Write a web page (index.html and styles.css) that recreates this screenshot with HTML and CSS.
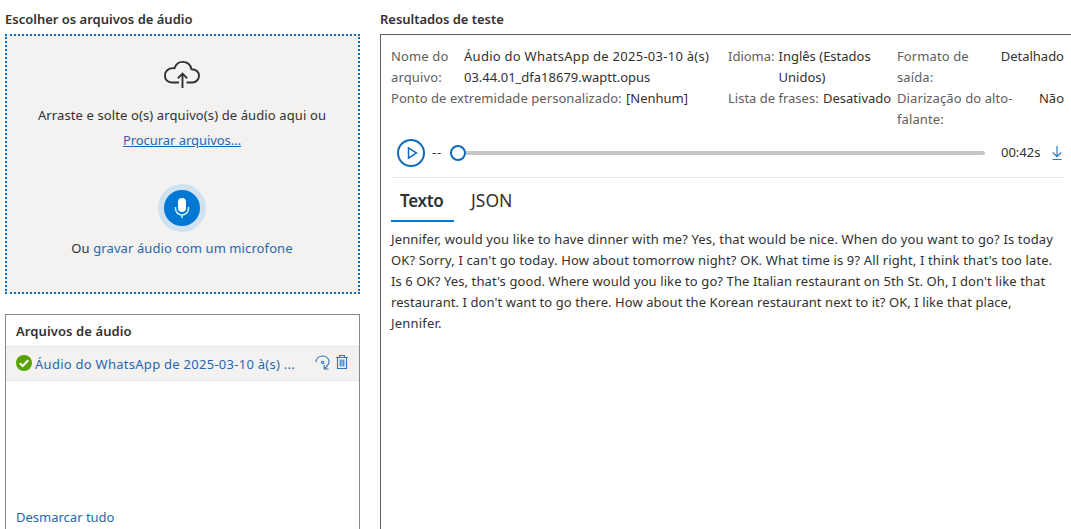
FILE: index.html
```html
<!DOCTYPE html>
<html lang="pt-BR">
<head>
<meta charset="utf-8">
<title>Resultados de teste</title>
<link rel="stylesheet" href="styles.css">
</head>
<body>
<main class="page">
  <section class="sources">
    <h2 class="heading">Escolher os arquivos de áudio</h2>
    <div class="dropzone">
      <svg class="cloud" width="38" height="30" viewBox="0 0 38 30" fill="none" stroke="#323130" stroke-width="1.9"><path d="M16 22.500H8.500C4.500 22.500 1.900 19.300 1.900 15.500C1.900 11 5.500 7.500 11.500 8.200C13 4 15.800 1.900 19.500 1.900C24 1.900 27.500 4.500 28.500 9.200C33 9 36 12 36 15.800C36 19.500 33 22.500 29.500 22.500H23.500M19.500 28V14M14.800 18.300L19.500 13.600L24.200 18.300"/></svg>
      <p class="drop-text">Arraste e solte o(s) arquivo(s) de áudio aqui ou</p>
      <a class="link browse">Procurar arquivos...</a>
      <div class="mic">
        <svg width="48" height="48" viewBox="0 0 48 48"><circle cx="24" cy="24" r="24" fill="#d0e2f0"/><circle cx="24" cy="24" r="18" fill="#0078d4"/><rect x="20" y="14" width="8" height="14" rx="4" fill="#fff"/><path d="M17.500 23V24.500A6.500 6.500 0 0 0 30.500 24.500V23M24 31V34" fill="none" stroke="#d4f0ff" stroke-width="1.500"/></svg>
      </div>
      <p class="record">Ou <a class="link">gravar áudio com um microfone</a></p>
    </div>
    <div class="files">
      <h3 class="files-title">Arquivos de áudio</h3>
      <div class="file">
        <svg width="16" height="16" viewBox="0 0 16 16"><circle cx="8" cy="8" r="8" fill="#57a300"/><path d="M3.700 8.200L6.700 11L12.200 5.200" fill="none" stroke="#fff" stroke-width="2.100"/></svg>
        <a class="link file-name">Áudio do WhatsApp de 2025-03-10 à(s) ...</a>
        <svg class="redo" width="16" height="16" viewBox="0 0 16 16" fill="none" stroke="#2b76bd" stroke-width="1.100"><path d="M1 7.200A6.600 6.600 0 0 1 14 6C14.500 9 12.500 11 9.500 13.700M9.200 10V14H13.500"/><circle cx="7.700" cy="7.500" r="1.200"/></svg>
        <svg width="14" height="16" viewBox="0 0 14 16" fill="none" stroke="#2b76bd" stroke-width="1.100"><path d="M1 3.500H13M4.500 3.500V1.500H9.500V3.500M2.500 3.500V14.500H11.500V3.500M5.200 5.500V12.500M7 5.500V12.500M8.800 5.500V12.500"/></svg>
      </div>
      <a class="link clear">Desmarcar tudo</a>
    </div>
  </section>
  <section class="results">
    <h2 class="heading results-heading">Resultados de teste</h2>
    <div class="panel">
      <div class="meta">
        <div class="pair pair-name"><span class="label">Nome do<br>arquivo:</span><span class="value"><span class="first">Áudio do WhatsApp de 2025-03-10 à(s)</span><br>03.44.01_dfa18679.waptt.opus</span></div>
        <div class="pair pair-language"><span class="label">Idioma:</span><span class="value">Inglês (Estados<br>Unidos)</span></div>
        <div class="pair pair-end"><span class="label">Formato de<br>saída:</span><span class="value">Detalhado</span></div>
        <div class="pair pair-endpoint"><span class="label">Ponto de extremidade personalizado:</span><span class="value">[Nenhum]</span></div>
        <div class="pair pair-phrases"><span class="label">Lista de frases:</span><span class="value">Desativado</span></div>
        <div class="pair pair-end"><span class="label">Diarização do alto-<br>falante:</span><span class="value">Não</span></div>
      </div>
      <div class="player">
        <svg width="28" height="28" viewBox="0 0 28 28" fill="none" stroke="#0f6cbd"><circle cx="14" cy="14" r="13" stroke-width="2"/><path d="M11.500 8.800V19.200L19.500 14Z" stroke-width="1.500"/></svg>
        <span class="elapsed">--</span>
        <div class="slider"><span class="thumb"></span><span class="track"></span></div>
        <span class="duration">00:42s</span>
        <svg class="download" width="12" height="16" viewBox="0 0 12 16" fill="none" stroke="#2b7cc8" stroke-width="1.200"><path d="M6 1V11.500M1.800 7.500L6 11.700L10.200 7.500M1.500 14.500H10.500"/></svg>
      </div>
      <div class="tabs"><span class="tab active">Texto</span><span class="tab">JSON</span></div>
      <p class="transcript">
        <span class="line l1">Jennifer, would you like to have dinner with me? Yes, that would be nice. When do you want to go? Is today</span>
        <span class="line l2">OK? Sorry, I can't go today. How about tomorrow night? OK. What time is 9? All right, I think that's too late.</span>
        <span class="line l3">Is 6 OK? Yes, that's good. Where would you like to go? The Italian restaurant on 5th St. Oh, I don't like that</span>
        <span class="line l4">restaurant. I don't want to go there. How about the Korean restaurant next to it? OK, I like that place,</span>
        <span class="line l5">Jennifer.</span>
      </p>
    </div>
  </section>
</main>
</body>
</html>
```
FILE: styles.css
```css
* { box-sizing: border-box; }
body { margin: 0; background: #fff; color: #323130; font: 13px/21px "Noto Sans", "Open Sans", sans-serif; overflow: hidden; }
h2, h3, p { margin: 0; }
svg { display: block; flex: none; }
.page { display: grid; grid-template-columns: 355px 691px; column-gap: 20px; height: 529px; padding-left: 5px; }
.sources, .results { display: flex; flex-direction: column; min-width: 0; white-space: nowrap; }
.heading { height: 34px; padding-top: 9px; font-size: 13px; font-weight: 600; line-height: 20px; }
.results-heading { letter-spacing: -.04px; }
.link { color: #1f68b0; }
.dropzone { display: flex; flex-direction: column; align-items: center; height: 260px; padding-right: 1px; border: 2px dotted #0f6cbd; background: #f3f2f1; }
.cloud { margin-top: 24px; }
.drop-text { margin-top: 15px; letter-spacing: .11px; }
.browse { margin-top: 4px; letter-spacing: -.05px; text-decoration: underline; }
.mic { margin-top: 33px; }
.record { margin-top: 6px; letter-spacing: .1px; }
.files { flex: 1; display: flex; flex-direction: column; margin-top: 20px; border: 1px solid #8a8886; border-bottom: 0; }
.files-title { height: 31px; padding: 6px 10px; font-size: 13px; font-weight: 600; line-height: 20px; letter-spacing: .1px; }
.file { display: flex; align-items: center; height: 35px; padding: 0 10px; background: #f3f2f1; border: solid #e8e6e4; border-width: 1px 0; }
.file-name { margin-left: 3px; padding-top: 1px; letter-spacing: .27px; }
.redo { margin: -2px 4px 0 auto; }
.file svg:first-child { margin-top: -1px; }
.file svg:last-child { margin-top: -3px; }
.clear { margin: auto 0 1px 10px; }
.panel { flex: 1; padding: 11px 7px 0 10px; border: solid #605e5c; border-width: 1px 0 0 1px; }
.meta { display: grid; grid-template-columns: 337px 169px 167px; }
.pair { display: flex; }
.label { color: #605e5c; }
.first { letter-spacing: .27px; }
.pair-name .label { width: 73px; letter-spacing: .15px; }
.pair-language .label { width: 50.500px; }
.pair-endpoint .label { width: 235px; letter-spacing: .06px; }
.pair-phrases .label { width: 95px; }
.pair-end { justify-content: space-between; }
.pair-end .label { letter-spacing: .1px; }
.player { display: flex; align-items: center; height: 48px; padding: 0 1px 2px 6px; border-bottom: 1px solid #e6e5e4; }
.elapsed { width: 25px; padding-left: 7px; letter-spacing: .8px; }
.slider { display: flex; align-items: center; width: 535px; }
.thumb { width: 16px; height: 16px; border: 2px solid #0f6cbd; border-radius: 50%; }
.track { flex: 1; height: 4px; background: #c8c6c4; border-radius: 0 2px 2px 0; }
.duration { margin-left: 16px; }
.download { margin-left: auto; }
.tabs { display: flex; height: 44px; font-size: 17.500px; line-height: 45px; }
.tab { padding: 0 9px; }
.tab.active { width: 63px; margin-right: 8px; font-size: 17px; font-weight: 600; letter-spacing: -.3px; border-bottom: 2px solid #0078d4; }
.transcript { margin-top: 7px; }
.line { display: block; }
.l1 { letter-spacing: .14px; }
.l2 { letter-spacing: .135px; }
.l3 { letter-spacing: .1px; }
.l4 { letter-spacing: .07px; }
.l5 { letter-spacing: .2px; }
```
